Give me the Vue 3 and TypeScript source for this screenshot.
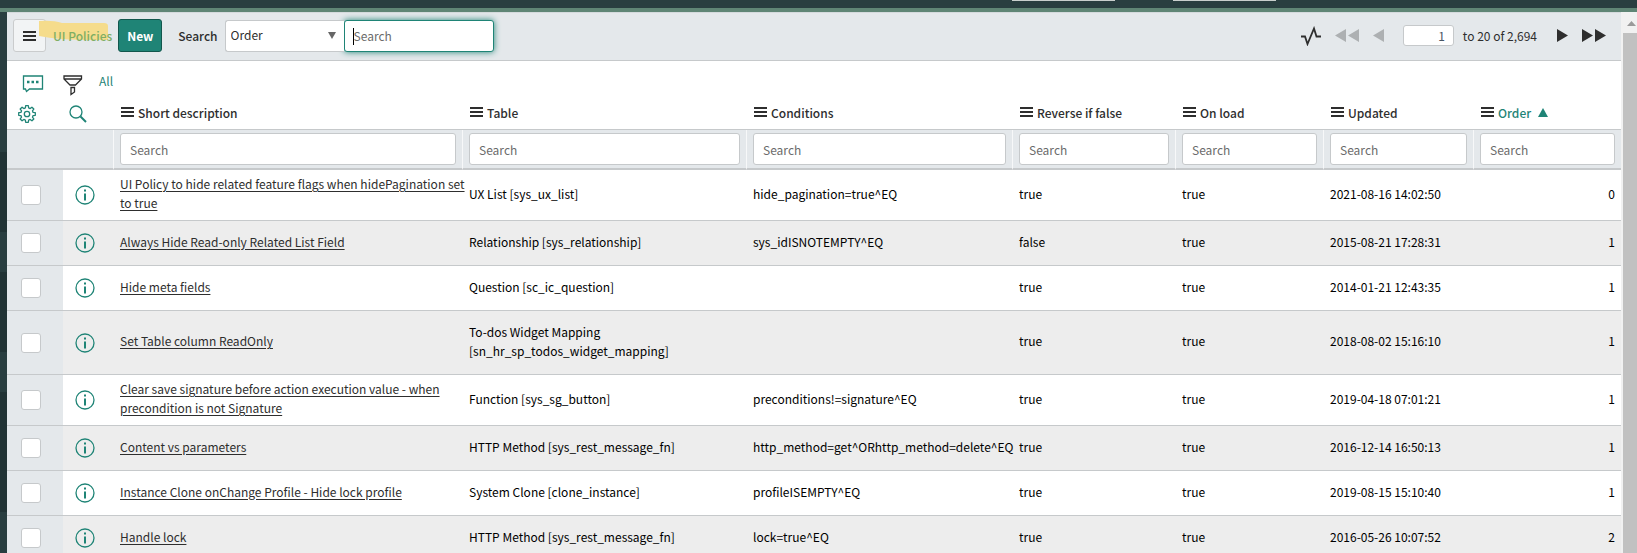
<script setup lang="ts">
interface Policy {
  description: string
  table: string
  conditions: string
  reverse: boolean
  onLoad: boolean
  updated: string
  order: number
  size?: 'double' | 'tall'
}

interface Column {
  key: string
  label: string
}

const columns: Column[] = [
  { key: 'description', label: 'Short description' },
  { key: 'table', label: 'Table' },
  { key: 'conditions', label: 'Conditions' },
  { key: 'reverse', label: 'Reverse if false' },
  { key: 'onload', label: 'On load' },
  { key: 'updated', label: 'Updated' },
  { key: 'order', label: 'Order' },
]

const policies: Policy[] = [
  { description: 'UI Policy to hide related feature flags when hidePagination set to true', table: 'UX List [sys_ux_list]', conditions: 'hide_pagination=true^EQ', reverse: true, onLoad: true, updated: '2021-08-16 14:02:50', order: 0, size: 'double' },
  { description: 'Always Hide Read-only Related List Field', table: 'Relationship [sys_relationship]', conditions: 'sys_idISNOTEMPTY^EQ', reverse: false, onLoad: true, updated: '2015-08-21 17:28:31', order: 1 },
  { description: 'Hide meta fields', table: 'Question [sc_ic_question]', conditions: '', reverse: true, onLoad: true, updated: '2014-01-21 12:43:35', order: 1 },
  { description: 'Set Table column ReadOnly', table: 'To-dos Widget Mapping [sn_hr_sp_todos_widget_mapping]', conditions: '', reverse: true, onLoad: true, updated: '2018-08-02 15:16:10', order: 1, size: 'tall' },
  { description: 'Clear save signature before action execution value - when precondition is not Signature', table: 'Function [sys_sg_button]', conditions: 'preconditions!=signature^EQ', reverse: true, onLoad: true, updated: '2019-04-18 07:01:21', order: 1, size: 'double' },
  { description: 'Content vs parameters', table: 'HTTP Method [sys_rest_message_fn]', conditions: 'http_method=get^ORhttp_method=delete^EQ', reverse: true, onLoad: true, updated: '2016-12-14 16:50:13', order: 1 },
  { description: 'Instance Clone onChange Profile - Hide lock profile', table: 'System Clone [clone_instance]', conditions: 'profileISEMPTY^EQ', reverse: true, onLoad: true, updated: '2019-08-15 15:10:40', order: 1 },
  { description: 'Handle lock', table: 'HTTP Method [sys_rest_message_fn]', conditions: 'lock=true^EQ', reverse: true, onLoad: true, updated: '2016-05-26 10:07:52', order: 2 },
]

// Outline of the eight-toothed settings gear, centred in an 18px box.
const teeth = 8
const gear = Array.from({ length: teeth }, (_, i) => {
  const step = (Math.PI * 2) / teeth
  const base = i * step
  return [[-0.26, 6.3], [-0.16, 8.4], [0.16, 8.4], [0.26, 6.3]]
    .map(([turn, radius]) => {
      const angle = base + turn
      return `${(9 + radius * Math.cos(angle)).toFixed(2)} ${(9 + radius * Math.sin(angle)).toFixed(2)}`
    })
    .join('L')
}).join('L')
const gearPath = `M${gear}Z`
</script>

<template>
  <div class="app">
    <div class="banner"><i class="tab"></i><i class="tab"></i></div>
    <div class="body">
      <div class="nav-edge"></div>
      <main class="list">
        <header class="list-header">
          <button class="menu" type="button" aria-label="List controls">
            <svg width="13" height="10" viewBox="0 0 13 10"><path d="M0 1h13M0 5h13M0 9h13" stroke="#2e2e2e" stroke-width="2" /></svg>
          </button>
          <h1 class="title">
            UI Policies
            <svg class="marker" width="70" height="21" viewBox="0 0 70 21"><path d="M0 1Q14 0 23 3L65 3Q69 3 69 6V20Q36 20 22 19Q10 18 0 16Z" fill="#f5dc8c" /></svg>
          </h1>
          <button class="new" type="button">New</button>
          <label class="search-label" for="search-field">Search</label>
          <div class="search-group">
            <div class="select-wrap">
              <select id="search-field"><option>Order</option></select>
              <svg class="caret" width="8" height="7" viewBox="0 0 8 7"><path d="M0 0H8L4 7Z" fill="#666" /></svg>
            </div>
            <input class="search-text" type="text" placeholder="Search" aria-label="Search text">
          </div>
          <div class="pager">
            <button class="icon pulse" type="button" aria-label="Activity">
              <svg width="20" height="20" viewBox="0 0 20 20"><path d="M0 10.500H4L6.500 18L13 2.500L15.500 10.500H20" fill="none" stroke="#2e2e2e" stroke-width="1.800" /></svg>
            </button>
            <button class="icon first" type="button" aria-label="First page" disabled>
              <svg width="24" height="13" viewBox="0 0 24 13"><path d="M11 0V13L0 6.500ZM24 0V13L13 6.500Z" fill="#adb0b2" /></svg>
            </button>
            <button class="icon prev" type="button" aria-label="Previous page" disabled>
              <svg width="11" height="13" viewBox="0 0 11 13"><path d="M11 0V13L0 6.500Z" fill="#adb0b2" /></svg>
            </button>
            <input id="first-row" class="page-input" type="text" value="1">
            <label class="range" for="first-row">to 20 of 2,694</label>
            <button class="icon next" type="button" aria-label="Next page">
              <svg width="11" height="13" viewBox="0 0 11 13"><path d="M0 0V13L11 6.500Z" fill="#2e2e2e" /></svg>
            </button>
            <button class="icon last" type="button" aria-label="Last page">
              <svg width="24" height="13" viewBox="0 0 24 13"><path d="M0 0V13L11 6.500ZM13 0V13L24 6.500Z" fill="#2e2e2e" /></svg>
            </button>
          </div>
        </header>

        <div class="filters">
          <button class="icon" type="button" aria-label="Comments">
            <svg width="22" height="18" viewBox="0 0 22 18" fill="none" stroke="#1f8476"><path d="M1.500 1H20.500V14H7.500L4.500 16.500L3.500 14H1.500Z" stroke-width="1.300" /><path d="M5 7H7.500M9.500 7H12M14 7H16.500" stroke-width="2.500" /></svg>
          </button>
          <button class="icon" type="button" aria-label="Filter">
            <svg width="20" height="21" viewBox="0 0 20 21" fill="none" stroke="#2e2e2e" stroke-width="1.300"><path d="M1 1H18.500V4L12.500 10H7L1 4ZM1 4H18.500M8 12.500H11.500V17L8 19.500Z" /></svg>
          </button>
          <a class="all" href="#">All</a>
        </div>

        <table>
          <colgroup>
            <col class="c-check"><col class="c-info">
            <col v-for="c in columns" :key="c.key" :class="'c-' + c.key">
          </colgroup>
          <thead>
            <tr class="heads">
              <th class="tool">
                <button class="icon" type="button" aria-label="Personalize list">
                  <svg width="18" height="18" viewBox="0 0 18 18" fill="none" stroke="#1f8476" stroke-width="1.300"><path :d="gearPath" stroke-linejoin="round" /><circle cx="9" cy="9" r="2.700" /></svg>
                </button>
              </th>
              <th class="tool">
                <button class="icon" type="button" aria-label="Toggle column search">
                  <svg width="18" height="18" viewBox="0 0 18 18" fill="none" stroke="#1f8476"><circle cx="7" cy="7" r="6" stroke-width="1.300" /><path d="M11.500 11.500L17 17" stroke-width="2" /></svg>
                </button>
              </th>
              <th v-for="c in columns" :key="c.key" :class="{ sorted: c.key === 'order' }">
                <div class="head">
                  <svg width="13" height="10" viewBox="0 0 13 10"><path d="M0 1h13M0 5h13M0 9h13" stroke="#2e2e2e" stroke-width="2" /></svg>
                  <a href="#">{{ c.label }}</a>
                  <svg v-if="c.key === 'order'" class="arrow" width="10" height="9" viewBox="0 0 10 9"><path d="M0 9L5 0L10 9Z" fill="#1f8476" /></svg>
                </div>
              </th>
            </tr>
            <tr class="searches">
              <td colspan="2"></td>
              <td v-for="c in columns" :key="c.key" class="divided">
                <input type="text" placeholder="Search" :aria-label="'Search ' + c.label">
              </td>
            </tr>
          </thead>
          <tbody>
            <tr v-for="p in policies" :key="p.description" :class="p.size">
              <td class="check"><input type="checkbox" :aria-label="'Select ' + p.description"></td>
              <td class="info">
                <button class="icon" type="button" :aria-label="'Preview ' + p.description">
                  <svg width="20" height="20" viewBox="0 0 20 20" fill="none" stroke="#1f8476"><circle cx="10" cy="10" r="9" stroke-width="1.300" /><path d="M10 8.500V15.500" stroke-width="2" /><path d="M10 4.500V6.500" stroke-width="2" /></svg>
                </button>
              </td>
              <td><div class="wide"><a class="record" href="#">{{ p.description }}</a></div></td>
              <td>{{ p.table }}</td>
              <td class="code">{{ p.conditions }}</td>
              <td>{{ p.reverse }}</td>
              <td>{{ p.onLoad }}</td>
              <td>{{ p.updated }}</td>
              <td class="number">{{ p.order }}</td>
            </tr>
          </tbody>
        </table>
      </main>
      <div class="scrollbar">
        <svg width="9" height="5" viewBox="0 0 9 5"><path d="M0 5L4.500 0L9 5Z" fill="#9a9a9a" /></svg>
        <div class="thumb"></div>
      </div>
    </div>
  </div>
</template>

<style>
body {
  margin: 0;
  overflow: hidden;
}
</style>

<style scoped>
* {
  box-sizing: border-box;
}

.app {
  display: flex;
  flex-direction: column;
  height: 100vh;
  overflow: hidden;
  background: #fff;
  color: #000;
  font: 12px/19px "Noto Sans CJK SC", "Noto Sans", sans-serif;
}

button,
input,
select {
  font: inherit;
  color: inherit;
  margin: 0;
}

svg {
  display: block;
}

.banner {
  display: flex;
  flex: none;
  justify-content: flex-end;
  gap: 58px;
  height: 12px;
  padding-right: 361px;
  background: #293e40;
  border-bottom: 4px solid #5f8575;
}

.tab {
  width: 103px;
  height: 1px;
  background: #c9cfcd;
}

.body {
  display: flex;
  flex: 1;
  min-height: 0;
}

.nav-edge {
  flex: none;
  width: 7px;
  background: linear-gradient(#293e40 140px, #213335 140px 220px, #293e40 220px 260px, #213335 260px 340px, #293e40 340px 380px, #213335 380px 500px, #293e40 500px);
}

.list {
  flex: 1;
  min-width: 0;
  overflow: hidden;
}

.list-header {
  display: flex;
  align-items: center;
  height: 49px;
  padding: 0 15px 2px 6px;
  background: #e4e8eb;
  border-top: 1px solid #d5dadd;
  border-bottom: 1px solid #c6c9cb;
}

.menu {
  display: grid;
  place-items: center;
  width: 33px;
  height: 33px;
  padding: 0;
  background: #f2f4f5;
  border: 1px solid #cacccd;
  border-radius: 3px;
}

.title {
  position: relative;
  isolation: isolate;
  margin: 0 6px 0 7px;
  color: #7fae63;
  font-size: 12px;
  line-height: 19px;
  font-weight: 500;
  white-space: nowrap;
}

.marker {
  position: absolute;
  z-index: -1;
  left: -14px;
  top: -6px;
}

.new {
  width: 44px;
  height: 33px;
  padding: 0;
  background: #1f8476;
  border: 1px solid #12574d;
  border-radius: 3px;
  color: #fff;
  font-weight: 700;
}

.search-label {
  margin: 0 7px 0 16px;
  color: #2e2e2e;
  font-weight: 500;
}

.search-group {
  display: flex;
}

.select-wrap {
  position: relative;
}

.select-wrap select {
  display: block;
  width: 119px;
  height: 32px;
  padding: 0 0 2px 5px;
  appearance: none;
  background: #fff;
  border: 1px solid #c6c9cb;
  border-right: 0;
  border-radius: 3px 0 0 3px;
  color: #2e2e2e;
}

.caret {
  position: absolute;
  right: 8px;
  top: 12px;
}

.search-text {
  width: 150px;
  height: 32px;
  padding: 0 9px;
  background: #fff linear-gradient(#000, #000) 8px 7px / 1px 17px no-repeat;
  border: 1px solid #1f8476;
  border-radius: 3px;
  box-shadow: 0 0 6px #1f8476;
  outline: 0;
}

input::placeholder {
  color: #6b6b6b;
  opacity: 1;
}

.pager {
  display: flex;
  align-items: center;
  margin-left: auto;
}

.icon {
  padding: 0;
  background: none;
  border: 0;
}

.first,
.prev,
.last {
  margin-left: 14px;
}

.page-input {
  width: 51px;
  height: 21px;
  margin: 0 9px 0 19px;
  padding: 0 8px;
  background: #fff;
  border: 1px solid #c6c9cb;
  border-radius: 3px;
  color: #485563;
  text-align: right;
}

.range {
  color: #2e2e2e;
}

.next {
  margin-left: 20px;
}

.filters {
  display: flex;
  align-items: flex-start;
  gap: 19px;
  height: 37px;
  padding: 14px 15px 0;
}

.all {
  margin: -4px 0 0 -3px;
  color: #1f8476;
  text-decoration: none;
}

table {
  width: 100%;
  table-layout: fixed;
  border-collapse: separate;
  border-spacing: 0;
}

.c-check {
  width: 56px;
}

.c-info {
  width: 50px;
}

.c-table {
  width: 284px;
}

.c-conditions {
  width: 266px;
}

.c-reverse {
  width: 163px;
}

.c-onload {
  width: 148px;
}

.c-updated {
  width: 150px;
}

.c-order {
  width: 148px;
}

th,
td {
  padding: 0 6px 0 7px;
  border-bottom: 1px solid #c6c9cb;
  text-align: left;
  vertical-align: middle;
}

.heads th {
  height: 32px;
  padding-bottom: 3px;
  font-weight: 500;
}

.heads .tool {
  padding: 4px 0 0 11px;
}

.heads .tool + .tool {
  padding-left: 6px;
}

.head {
  display: flex;
  align-items: center;
  gap: 4px;
  padding-left: 1px;
}

.head a {
  color: #2e2e2e;
  text-decoration: none;
}

.sorted .head a {
  color: #1f8476;
}

.arrow {
  margin-left: 3px;
}

.searches td {
  height: 40px;
  background: #e4e8eb;
  border-bottom: 2px solid #c6c9cb;
}

.searches .divided {
  padding-left: 6px;
  border-left: 1px solid #f7f8f9;
}

.searches input {
  display: block;
  width: 100%;
  height: 32px;
  padding: 0 9px;
  background: #fff;
  border: 1px solid #c6c9cb;
  border-radius: 3px;
}

tbody td {
  height: 45px;
  padding-bottom: 4px;
}

tbody .double td {
  height: 51px;
}

tbody .tall td {
  height: 64px;
}

tbody tr:nth-child(even) td {
  background: #ededed;
}

tbody tr td.check {
  padding: 0 0 0 14px;
  background: #e4e8eb;
}

.check input {
  display: block;
  width: 20px;
  height: 20px;
  appearance: none;
  background: #fff;
  border: 1px solid #c6c9cb;
  border-radius: 3px;
}

tbody .info {
  padding: 4px 0 0 12px;
}

/* Long descriptions may run into the cell's gutter before they wrap. */
.wide {
  margin-right: -10px;
}

.code {
  white-space: nowrap;
}

.record {
  color: #2e2e2e;
  text-decoration: underline;
  text-underline-offset: 2px;
}

tbody .number {
  text-align: right;
}

.scrollbar {
  display: flex;
  flex: none;
  flex-direction: column;
  align-items: flex-end;
  gap: 7px;
  width: 16px;
  padding: 9px 0 0 2px;
  background: #f1f1f1;
}

.scrollbar svg {
  margin-right: 1px;
}

.thumb {
  flex: 1;
  align-self: stretch;
  background: #c1c1c1;
}
</style>
